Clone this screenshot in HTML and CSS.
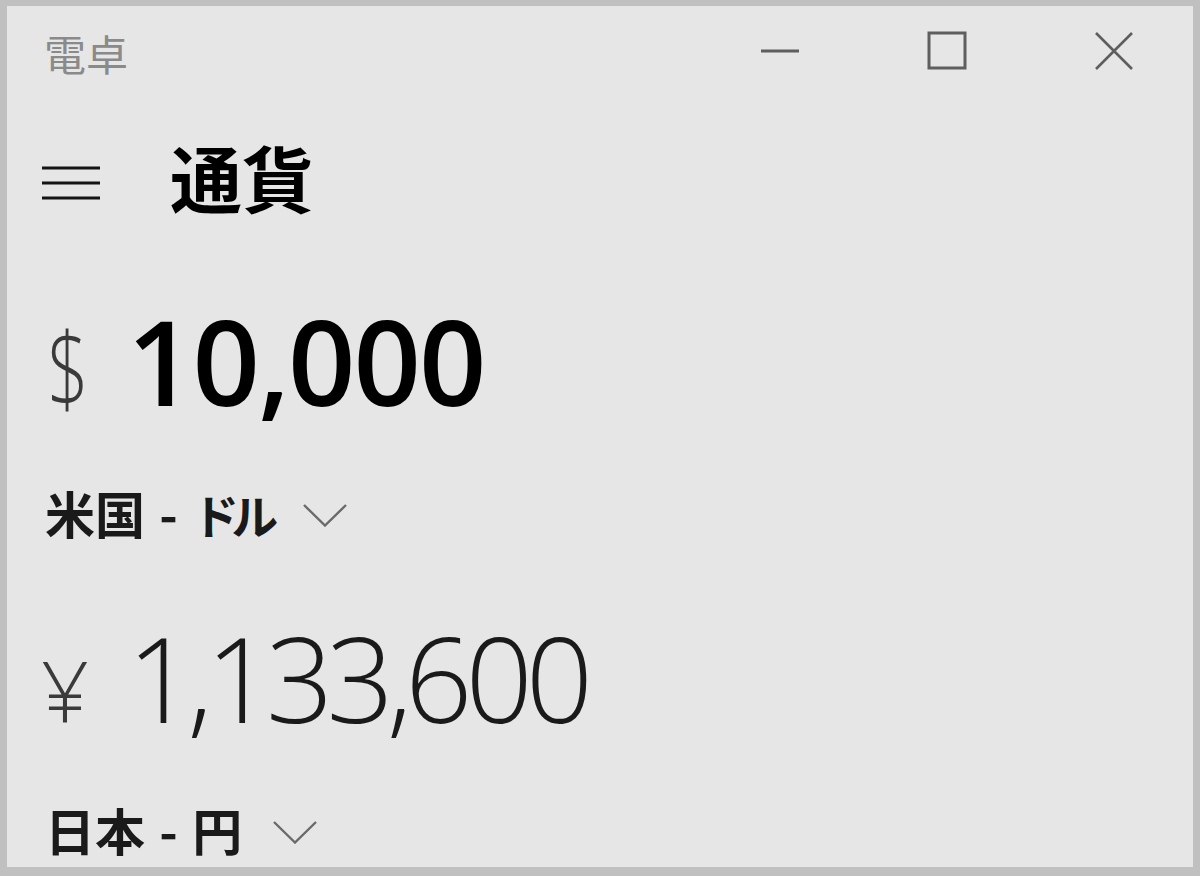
FILE: index.html
```html
<!DOCTYPE html>
<html lang="ja">
<head>
<meta charset="utf-8">
<title>電卓</title>
<link rel="stylesheet" href="styles.css">
</head>
<body>
<div class="window">
  <div class="titlebar">
    <div class="app-title">電卓</div>
    <div class="caption">
      <div class="cap-btn">
        <svg width="40" height="40" viewBox="0 0 40 40"><line x1="1" y1="20" x2="39" y2="20" stroke="#5e5e5e" stroke-width="3"/></svg>
      </div>
      <div class="cap-btn">
        <svg width="40" height="40" viewBox="0 0 40 40"><rect x="2" y="2" width="36" height="35" fill="none" stroke="#5e5e5e" stroke-width="3"/></svg>
      </div>
      <div class="cap-btn">
        <svg width="40" height="40" viewBox="0 0 40 40"><path d="M2 2 L38 38 M38 2 L2 38" stroke="#5e5e5e" stroke-width="2.6" fill="none"/></svg>
      </div>
    </div>
  </div>
  <div class="header">
    <svg class="hamburger" width="58" height="34" viewBox="0 0 58 34"><path d="M0 2 H58 M0 17 H58 M0 32 H58" stroke="#141414" stroke-width="3.2" fill="none"/></svg>
    <div class="mode">通貨</div>
  </div>
  <div class="value from">
    <span class="sym dollar">$</span><span class="num bold">10,000</span>
  </div>
  <div class="unit first">
    <span>米国 - <span class="kana">ドル</span></span>
    <svg class="chev" width="44" height="23" viewBox="0 0 44 23"><path d="M1 1 L22 21.5 L43 1" stroke="#6a6a6a" stroke-width="2.4" fill="none"/></svg>
  </div>
  <div class="value to">
    <span class="sym yen">¥</span><span class="num light">1,133,600</span>
  </div>
  <div class="unit second">
    <span>日本 - 円</span>
    <svg class="chev" width="44" height="23" viewBox="0 0 44 23"><path d="M1 1 L22 21.5 L43 1" stroke="#6a6a6a" stroke-width="2.4" fill="none"/></svg>
  </div>
</div>
</body>
</html>
```
FILE: styles.css
```css
html, body {
  margin: 0;
  padding: 0;
  width: 1200px;
  height: 876px;
  overflow: hidden;
  background: #c2c2c2;
}
.window {
  box-sizing: border-box;
  width: 1200px;
  height: 876px;
  border-style: solid;
  border-color: #c0c0c0;
  border-width: 6px 7px 9px 7px;
  background: #e6e6e6;
  overflow: hidden;
  display: flex;
  flex-direction: column;
  font-family: "Open Sans", "Noto Sans CJK JP", sans-serif;
  color: #000;
}
.titlebar {
  height: 96px;
  display: flex;
  align-items: center;
  justify-content: space-between;
  flex-shrink: 0;
}
.app-title {
  font-family: "Noto Sans CJK JP", sans-serif;
  font-size: 42px;
  color: #8a8a8a;
  padding-left: 37px;
  line-height: 1;
  margin-top: -2px;
}
.caption {
  display: flex;
  gap: 9px;
  height: 100%;
  padding-bottom: 6px;
  box-sizing: border-box;
}
.cap-btn {
  width: 158px;
  display: flex;
  align-items: center;
  justify-content: center;
}
.header {
  display: flex;
  align-items: center;
  height: 160px;
  padding-left: 35px;
  flex-shrink: 0;
}
.hamburger {
  margin-top: 2px;
}
.mode {
  font-family: "Noto Sans CJK JP", sans-serif;
  font-weight: 700;
  font-size: 72px;
  line-height: 1;
  margin-left: 70px;
  margin-top: -12px;
}
.value {
  display: flex;
  align-items: baseline;
  padding-left: 38px;
  flex-shrink: 0;
  box-sizing: border-box;
}
.value.from {
  height: 202px;
  padding-top: 40px;
}
.value.to {
  height: 217px;
  padding-top: 55px;
}
.sym {
  font-family: "Open Sans", sans-serif;
  font-weight: 300;
  color: #3a3a3a;
  width: 82px;
  line-height: 1;
}
.sym.dollar {
  font-size: 101px;
  transform: scaleX(0.72);
  transform-origin: 8px 50%;
}
.sym.yen {
  font-size: 84px;
  margin-left: -4px;
  width: 86px;
}
.num {
  font-size: 118px;
  line-height: 1;
}
.num.bold {
  font-weight: 600;
  letter-spacing: -2px;
}
.num.light {
  font-weight: 300;
  color: #1a1a1a;
  letter-spacing: -7px;
}
.unit {
  display: flex;
  align-items: center;
  padding-left: 38px;
  height: 100px;
  font-family: "Noto Sans CJK JP", sans-serif;
  font-weight: 700;
  font-size: 50px;
  word-spacing: 3px;
  color: #1a1a1a;
  flex-shrink: 0;
}
.unit span {
  margin-top: -5px;
}
.unit span span {
  margin-top: 0;
}
.kana {
  font-size: 47px;
  letter-spacing: -8px;
}
.chev {
  margin-left: 31px;
  margin-top: 2px;
}
.unit.first .chev {
  margin-left: 33px;
}
```
